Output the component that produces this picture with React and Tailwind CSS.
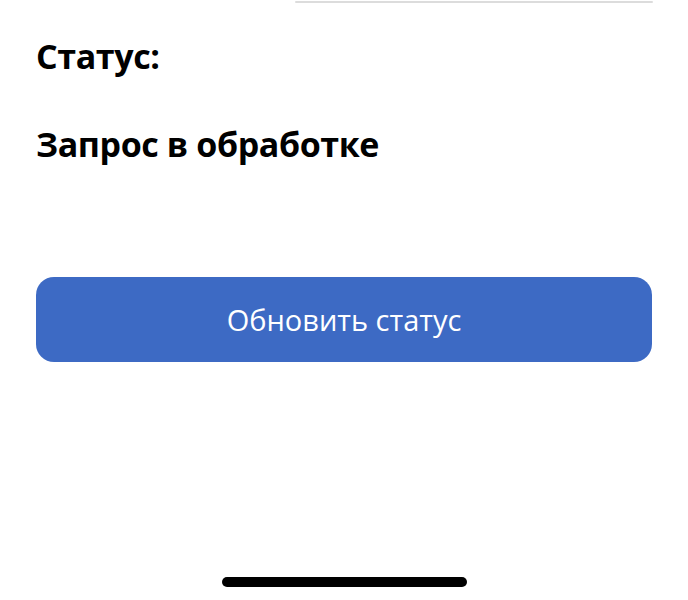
export default function App() {
    return (
        <div className="w-[688px] h-[600px] bg-white flex flex-col font-['Open_Sans',sans-serif] overflow-hidden">
            {/* cut-off divider from the block above */}
            <div className="flex justify-end pr-[35px] pt-[1px]">
                <div className="w-[358px] h-[2px] bg-[#dcdcdc] rounded-full" />
            </div>

            <div className="px-[36px] pt-[33px] flex flex-col">
                <h2 className="text-[34px] leading-[40px] tracking-[-0.4px] font-bold text-black">Статус:</h2>
                <p className="mt-[48px] text-[34px] leading-[40px] tracking-[-0.4px] font-bold text-black">Запрос в обработке</p>

                <button className="mt-[113px] h-[85px] w-full rounded-[18px] bg-[#3d6ac4] text-white text-[29px] font-normal flex items-center justify-center">
                    Обновить статус
                </button>
            </div>

            <div className="mt-auto mb-[13px] flex justify-center">
                <div className="w-[245px] h-[10px] rounded-full bg-black" />
            </div>
        </div>
    );
}
